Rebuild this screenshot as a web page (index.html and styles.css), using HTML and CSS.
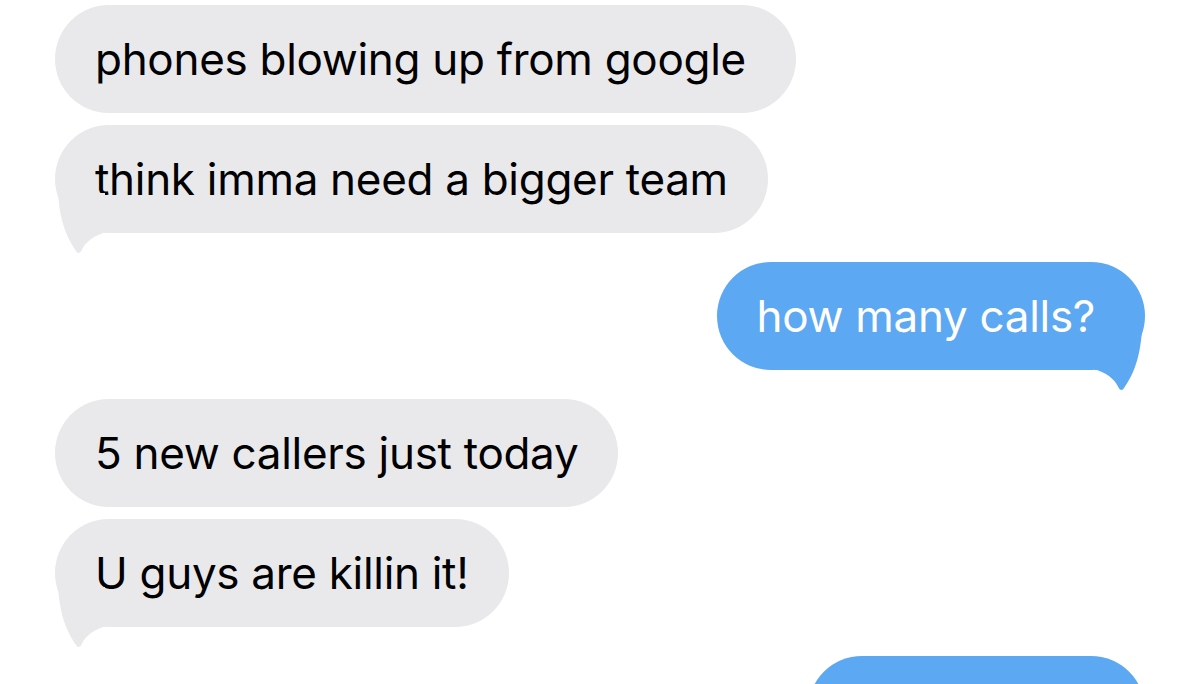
FILE: index.html
```html
<!DOCTYPE html>
<html lang="en">
<head>
<meta charset="utf-8">
<title>Messages</title>
<link rel="stylesheet" href="styles.css">
</head>
<body>
<main class="thread">
  <div class="group group-in">
    <div class="bubble in wide">phones blowing up from google</div>
    <div class="bubble in tail">think imma need a bigger team
      <svg class="tail-svg" viewBox="0 0 50 62" width="50" height="62" aria-hidden="true"><path d="M3 0 C4 14 6 28 12 42 C15 49 19 55 21 58 C22 60.5 24.5 60.5 26 58.5 C29 52 34 45 48 40 L50 40 L50 0 Z"/></svg>
    </div>
  </div>
  <div class="group group-out">
    <div class="bubble out tail">how many calls?
      <svg class="tail-svg" viewBox="0 0 50 62" width="50" height="62" aria-hidden="true"><path d="M3 0 C4 14 6 28 12 42 C15 49 19 55 21 58 C22 60.5 24.5 60.5 26 58.5 C29 52 34 45 48 40 L50 40 L50 0 Z"/></svg>
    </div>
  </div>
  <div class="group group-in">
    <div class="bubble in">5 new callers just today</div>
    <div class="bubble in tail">U guys are killin it!
      <svg class="tail-svg" viewBox="0 0 50 62" width="50" height="62" aria-hidden="true"><path d="M3 0 C4 14 6 28 12 42 C15 49 19 55 21 58 C22 60.5 24.5 60.5 26 58.5 C29 52 34 45 48 40 L50 40 L50 0 Z"/></svg>
    </div>
  </div>
  <div class="group group-out">
    <div class="bubble out last" aria-hidden="true"></div>
  </div>
</main>
</body>
</html>
```
FILE: styles.css
```css
html, body {
  margin: 0;
  padding: 0;
  background: #ffffff;
  overflow: hidden;
}

.thread {
  display: flex;
  flex-direction: column;
  gap: 29px;
  padding: 5px 55px 0 55px;
  font-family: "Inter", "Helvetica Neue", "Liberation Sans", sans-serif;
  font-size: 44px;
  line-height: 52px;
  letter-spacing: -0.3px;
}

.group {
  display: flex;
  flex-direction: column;
  gap: 12px;
}

.group-in {
  align-items: flex-start;
}

.group-out {
  align-items: flex-end;
}

.bubble {
  position: relative;
  padding: 28px 40px;
  border-radius: 54px;
  white-space: nowrap;
}

.bubble.in {
  background: #e9e9eb;
  color: #000000;
}

.bubble.wide {
  padding-right: 50px;
}

.bubble.out {
  background: #5ca8f2;
  color: #ffffff;
  padding-right: 50px;
}

.bubble.last {
  box-sizing: border-box;
  width: 337px;
  height: 108px;
  padding: 0;
}

.tail-svg {
  position: absolute;
  top: calc(100% - 40px);
  left: 0;
  display: block;
}

.bubble.in .tail-svg path {
  fill: #e9e9eb;
}

.bubble.out .tail-svg {
  left: auto;
  right: 0;
  transform: scaleX(-1);
}

.bubble.out .tail-svg path {
  fill: #5ca8f2;
}
```
